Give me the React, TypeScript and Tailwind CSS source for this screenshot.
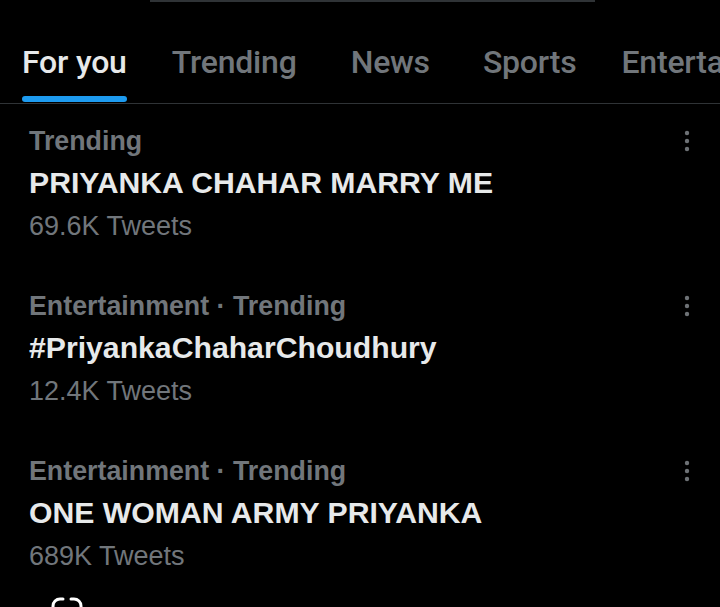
const tabs = [
  { label: "For you", active: true, gap: "ml-[22px]" },
  { label: "Trending", active: false, gap: "ml-[45px]" },
  { label: "News", active: false, gap: "ml-[54px]" },
  { label: "Sports", active: false, gap: "ml-[53px]" },
  { label: "Entertainment", active: false, gap: "ml-[45px]" },
];

const trends = [
  { context: "Trending", title: "PRIYANKA CHAHAR MARRY ME", count: "69.6K Tweets" },
  {
    context: "Entertainment · Trending",
    title: "#PriyankaChaharChoudhury",
    count: "12.4K Tweets",
  },
  {
    context: "Entertainment · Trending",
    title: "ONE WOMAN ARMY PRIYANKA",
    count: "689K Tweets",
  },
];

function MoreDots() {
  return (
    <svg width="8" height="22" viewBox="0 0 8 22" className="shrink-0">
      <circle cx="4" cy="3" r="2.2" fill="#6e7276" />
      <circle cx="4" cy="11" r="2.2" fill="#6e7276" />
      <circle cx="4" cy="19" r="2.2" fill="#6e7276" />
    </svg>
  );
}

export default function App() {
  return (
    <div
      className="h-[607px] w-[720px] overflow-hidden bg-black"
      style={{ fontFamily: "'Liberation Sans', Arial, sans-serif" }}
    >
      {/* search bar edge */}
      <div className="ml-[150px] h-[2px] w-[445px] bg-[#2f3336]" />

      {/* tabs */}
      <nav
        className="flex h-[102px] items-start overflow-hidden whitespace-nowrap border-b border-[#2f3336]"
        style={{ fontFamily: "Roboto, sans-serif" }}
      >
        {tabs.map((t) => (
          <div key={t.label} className={`${t.gap} flex shrink-0 flex-col`}>
            <span
              className={`mt-[40px] text-[32px] leading-[40px] font-medium tracking-[-0.2px] ${
                t.active ? "text-[#e7e9ea]" : "text-[#71767b]"
              }`}
            >
              {t.label}
            </span>
            {t.active && (
              <span className="mt-[14px] h-[6px] w-full rounded-full bg-[#1d9bf0]" />
            )}
          </div>
        ))}
      </nav>

      {/* trend list */}
      <ul>
        {trends.map((t) => (
          <li key={t.title} className="pt-[16px] pb-[22px] pl-[29px] pr-[29px]">
            <div className="flex items-center justify-between">
              <span className="text-[26.8px] leading-[42px] font-bold text-[#71767b]">
                {t.context}
              </span>
              <MoreDots />
            </div>
            <div className="text-[30.2px] leading-[42px] font-bold text-[#e7e9ea]">
              {t.title}
            </div>
            <div className="mt-[1px] text-[27px] leading-[42px] text-[#71767b]">
              {t.count}
            </div>
          </li>
        ))}
      </ul>

      {/* partially visible bottom icon */}
      <svg
        width="32"
        height="20"
        viewBox="0 0 32 20"
        className="-mt-[2px] ml-[51px]"
        fill="none"
        stroke="#ffffff"
        strokeWidth="3"
        strokeLinecap="round"
      >
        <path d="M12 2 H9 a7 7 0 0 0 -7 7 V12" />
        <path d="M20 2 H23 a7 7 0 0 1 7 7 V12" />
      </svg>
    </div>
  );
}
